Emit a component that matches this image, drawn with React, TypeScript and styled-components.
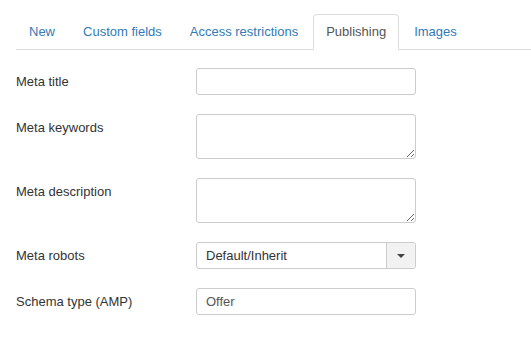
import React from "react";
import styled, { createGlobalStyle } from "styled-components";

const GlobalStyle = createGlobalStyle`
    html, body {
        margin: 0;
        padding: 0;
        background: #fff;
    }
    body {
        font-family: "Liberation Sans", Arial, sans-serif;
        font-size: 13px;
        color: #333;
    }
`;

const tabs = ["New", "Custom fields", "Access restrictions", "Publishing", "Images"];

export default function App() {
    return (
        <StyledPage>
            <GlobalStyle />
            <TabBar>
                {tabs.map((tab) => (
                    <Tab key={tab} $active={tab === "Publishing"}>
                        {tab}
                    </Tab>
                ))}
            </TabBar>

            <Form>
                <Label>Meta title</Label>
                <TextInput type="text" />

                <Label>Meta keywords</Label>
                <TextArea />

                <Label>Meta description</Label>
                <TextArea />

                <Label>Meta robots</Label>
                <SelectBox>
                    <span className="value">Default/Inherit</span>
                    <span className="toggle">
                        <Caret />
                    </span>
                </SelectBox>

                <Label>Schema type (AMP)</Label>
                <TextInput type="text" defaultValue="Offer" />
            </Form>
        </StyledPage>
    );
}

const StyledPage = styled.div`
    padding: 14px 0 0 16px;
`;

const TabBar = styled.ul`
    display: flex;
    list-style: none;
    margin: 0;
    padding: 0;
    border-bottom: 1px solid #ddd;
`;

const Tab = styled.li<{ $active?: boolean }>`
    margin: 0 2px -1px 0;
    padding: 7px 12px 8px;
    line-height: 19px;
    border: 1px solid ${(p) => (p.$active ? "#ddd" : "transparent")};
    border-bottom-color: ${(p) => (p.$active ? "#fff" : "transparent")};
    border-radius: 4px 4px 0 0;
    background: ${(p) => (p.$active ? "#fff" : "transparent")};
    color: ${(p) => (p.$active ? "#555" : "#337ab7")};
    cursor: pointer;
`;

const Form = styled.div`
    display: grid;
    grid-template-columns: 180px 220px;
    row-gap: 19px;
    margin-top: 18px;
    align-items: start;
`;

const Label = styled.label`
    padding-top: 4px;
    line-height: 19px;
    color: #333;
`;

const fieldBase = `
    box-sizing: border-box;
    width: 220px;
    border: 1px solid #ccc;
    border-radius: 3px;
    background: #fff;
    font-family: "Liberation Sans", Arial, sans-serif;
    font-size: 13px;
    color: #555;
    outline: none;
`;

const TextInput = styled.input`
    ${fieldBase}
    height: 27px;
    padding: 0 9px;
    margin: 0;
`;

const TextArea = styled.textarea`
    ${fieldBase}
    display: block;
    height: 45px;
    padding: 5px 9px;
    margin: 0;
    resize: vertical;
`;

const SelectBox = styled.div`
    ${fieldBase}
    height: 27px;
    display: flex;
    align-items: stretch;
    overflow: hidden;
    color: #333;

    .value {
        flex: 1;
        display: flex;
        align-items: center;
        padding-left: 9px;
    }

    .toggle {
        width: 28px;
        display: flex;
        align-items: center;
        justify-content: center;
        background: #f2f2f2;
        border-left: 1px solid #ccc;
    }
`;

const Caret = styled.span`
    width: 0;
    height: 0;
    border-left: 4px solid transparent;
    border-right: 4px solid transparent;
    border-top: 4px solid #444;
`;
